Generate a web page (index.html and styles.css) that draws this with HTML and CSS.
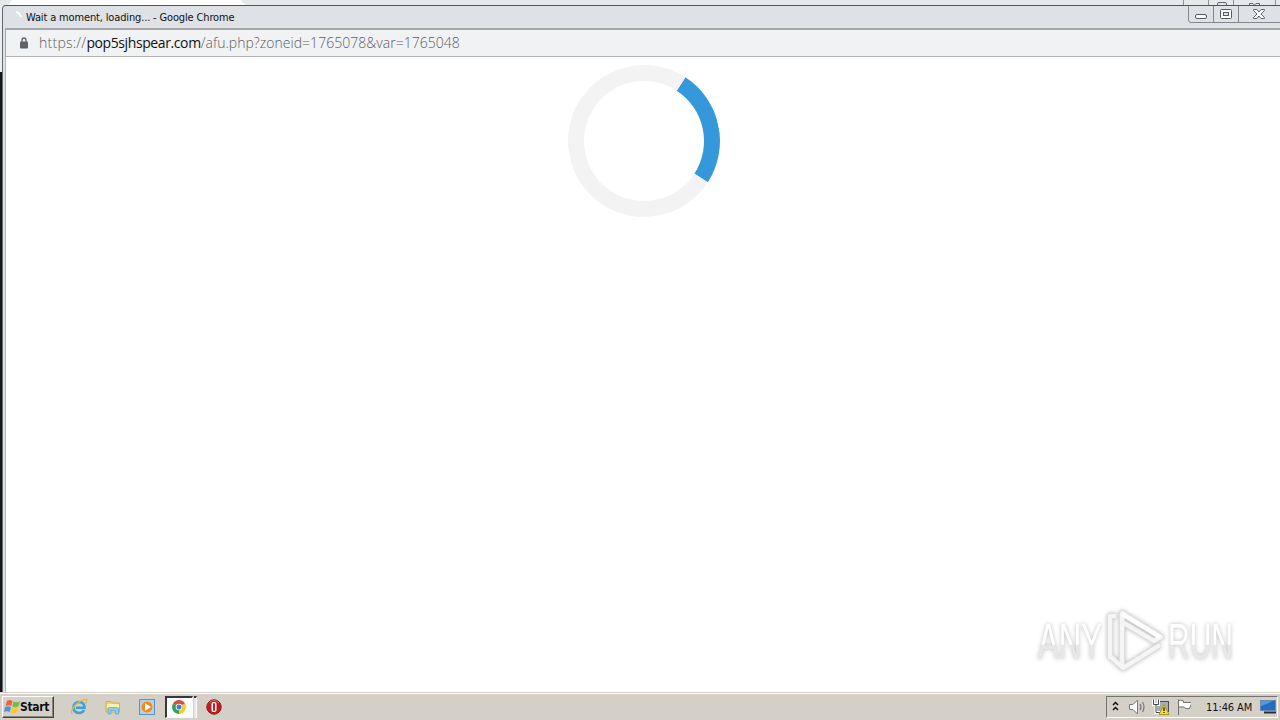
FILE: index.html
```html
<!DOCTYPE html>
<html lang="en">
  <head>
    <meta charset="UTF-8" />
    <title>Wait a moment, loading...</title>
    <link rel="stylesheet" href="styles.css">
  </head>
  <body>
    <div class="desktop">
      <div class="back-window">
        <svg width="1280" height="5">
          <path d="M5 6Q9 5 12 0H241Q243 4 248 6Z" fill="#fff"/>
          <path d="M1183.5 0V6M1208.5 0V6M1233.5 0V6M1275.5 0V6" stroke="#8d9297"/>
          <path d="M1217.5 6V4Q1217.500 2.500 1219 2.500H1225Q1226.500 2.500 1226.500 4V6M1249.500 5V3.500H1253L1254.500 5L1256 3.500H1259.500V5" fill="none" stroke="#62666b"/>
        </svg>
      </div>
      <div class="middle">
        <div class="edge"></div>
        <div class="window">
          <div class="title-bar">
            <svg class="favicon" width="8" height="8"><path d="M1 1Q5 2 6 6" fill="none" stroke="#fff" stroke-width="2"/></svg>
            <span class="title">Wait a moment, loading... - Google Chrome</span>
            <div class="controls">
              <svg width="92" height="18">
                <path d="M.5 0V14Q.5 16.500 3 16.500H92M25.500 0V16M50.500 0V16" fill="none" stroke="#85898e"/>
                <rect x="7.500" y="8.500" width="11" height="4" rx="1.500" fill="#fff" stroke="#555a60"/>
                <rect x="32.500" y="3.500" width="11" height="9" rx="1" fill="#fff" stroke="#555a60"/>
                <rect x="35.500" y="6.500" width="5" height="3" fill="#dee1e5" stroke="#555a60"/>
                <path d="M65.500 3.500H69L71 6L73 3.500H76.500V4.500L73 8L76.500 11.500V12.500H73L71 10L69 12.500H65.500V11.500L69 8L65.500 4.500Z" fill="#fff" stroke="#62666b"/>
              </svg>
            </div>
          </div>
          <div class="address-bar">
            <svg class="lock" width="8" height="12"><path d="M2 5V3.200Q2 1 4 1T6 3.200V5" fill="none" stroke="#5f6368" stroke-width="1.300"/><rect y="4.500" width="8" height="7" rx="1" fill="#5f6368"/></svg>
            <span class="url"><span class="scheme">https://</span><span class="host">pop5sjhspear.com</span><span class="path">/afu.php?zoneid=1765078&amp;var=1765048</span></span>
          </div>
          <div class="page">
            <div class="loader"></div>
          </div>
        </div>
      </div>
      <div class="taskbar">
        <div class="start">
          <svg width="17" height="16" viewBox="0 0 17 16">
            <path d="M3 2Q6 0 8.500 2L7.300 7Q4.500 5.500 1.500 7Z" fill="#ed6535"/>
            <path d="M9.500 2.500Q12.500 4 16 2.300L14.500 7.300Q11.500 9 8.300 7.500Z" fill="#79b84a"/>
            <path d="M1.200 8Q4 6.600 7 8L5.700 13Q3 11.500 0 13Z" fill="#4994dc"/>
            <path d="M8 8.500Q11 10 14.200 8.500L13 13.300Q9.500 15 6.700 13.500Z" fill="#f6c82d"/>
          </svg>
          <span>Start</span>
        </div>
        <div class="quick-launch">
          <svg class="ie" width="18" height="18" viewBox="0 0 18 18">
            <path d="M14 12Q12.500 15 9 15Q3.500 14.500 3.500 9.500Q4 4 9 4Q14.500 4.300 14.500 9.800H6" fill="none" stroke="#3ba0de" stroke-width="2.600"/>
            <path d="M2.500 16Q-.5 14 4.500 8Q11 1 16 1.300Q18 2.500 15.500 5.500" fill="none" stroke="#e4b83c" stroke-width="1.300"/>
          </svg>
          <svg class="folder" width="16" height="16" viewBox="0 0 16 16">
            <path d="M1 2.500H6L7 4H14.500V13H1Z" fill="#efd272" stroke="#d2b052"/>
            <path d="M2 5H14V9H2Z" fill="#fbefae"/>
            <path d="M3 15V10Q3 8.500 4.500 8.500H12Q13.500 8.500 13.500 10V15H10.500V11.500H6V15Z" fill="#8ecbea" stroke="#5ba6cd" stroke-width=".7"/>
          </svg>
          <svg class="media" width="16" height="16" viewBox="0 0 16 16">
            <rect x=".5" y=".5" width="15" height="15" fill="#acd1ee" stroke="#5a94c7"/>
            <circle cx="8" cy="8" r="6" fill="#f08a20" stroke="#d8dbe0" stroke-width=".7"/>
            <path d="M6 4.300L12 8L6 11.700Z" fill="#fff"/>
          </svg>
          <div class="task-active">
            <svg width="14" height="14" viewBox="0 0 14 14">
              <path d="M7 7L1 3.500A7 7 0 0 1 13 3.500Z" fill="#dc4a3b"/>
              <path d="M7 7L13 3.500A7 7 0 0 1 7 14Z" fill="#fbc82f"/>
              <path d="M7 7V14A7 7 0 0 1 1 3.500Z" fill="#37a058"/>
              <circle cx="7" cy="7" r="3.300" fill="#fff"/>
              <circle cx="7" cy="7" r="2.500" fill="#3e7ed2"/>
            </svg>
          </div>
          <div class="task-edge"></div>
          <svg class="opera" width="16" height="16" viewBox="0 0 16 16">
            <circle cx="8" cy="8" r="7.200" fill="#c01d22" stroke="#8b1518"/>
            <path d="M3 4Q8-1 13 4" fill="none" stroke="#e06d65"/>
            <rect x="5.500" y="3" width="5" height="10" rx="2" fill="#fff"/>
            <rect x="7" y="4" width="2" height="8" rx="1" fill="#b5262a"/>
          </svg>
        </div>
        <div class="tray">
          <svg class="tray-icons" width="84" height="20" viewBox="0 0 84 20">
            <path d="M6 8L8.500 5.500L11 8M6 13L8.500 10.500L11 13" fill="none" stroke="#111" stroke-width="1.500"/>
            <path d="M22.500 7.500H26L30.500 3V17L26 12.500H22.500Z" fill="#fff" stroke="#787878"/>
            <path d="M33 7Q35 10 33 13M35.500 5Q38.500 10 35.500 15" fill="none" stroke="#777" stroke-width="1.200"/>
            <rect x="50.500" y="4.500" width="11" height="10" fill="#a7adb3" stroke="#4d5052"/>
            <path d="M46.500 2.500V7.500H51.500V2.500M49 8V15.500H54" fill="none" stroke="#fff" stroke-width="3"/>
            <path d="M46.500 2.500V7.500H51.500V2.500M49 8V15.500H54" fill="none" stroke="#44474b"/>
            <path d="M57 7.500L62 17.500H52Z" fill="#ffdf28" stroke="#ad9429"/>
            <path d="M57 10.500V14M57 15V16" stroke="#111" stroke-width="1.300"/>
            <path d="M71.500 2.500V18M71.500 3.500Q74 2.500 76.500 4V5.500H85L82.500 11.500Q78.500 12.500 77 10H71.500" fill="#fff" stroke="#707070"/>
          </svg>
          <span class="clock">11:46 AM</span>
          <svg class="monitor" width="16" height="14" viewBox="0 0 16 14">
            <rect x=".5" y=".5" width="15" height="10" fill="#246bc3" stroke="#688bad"/>
            <path d="M1 1H12Q8 4 1 6Z" fill="#5698dc"/>
            <path d="M4 12.500H16" stroke="#292d36" stroke-width="2"/>
          </svg>
        </div>
      </div>
      <svg class="watermark" width="250" height="84" viewBox="0 0 250 84">
        <g class="mark" fill="none" stroke-linejoin="round">
          <path d="M92 63V11L131 35L124 39L92 20M80 57V14H86M80 54L93 66L130 43" stroke="#dedede" stroke-width="6"/>
          <path d="M92 63V11L131 35L124 39L92 20M80 57V14H86M80 54L93 66L130 43" stroke="#f5f5f5" stroke-width="4"/>
          <path d="M92 12L130 35" stroke="#fff" stroke-width="4"/>
        </g>
        <g class="mark brand">
          <text x="8" y="57" textLength="64" lengthAdjust="spacingAndGlyphs">ANY</text>
          <text x="138" y="57" textLength="65" lengthAdjust="spacingAndGlyphs">RUN</text>
        </g>
        <defs>
          <linearGradient id="fade" x1="0" y1="0" x2="0" y2="1">
            <stop offset=".54" stop-color="#fff"/>
            <stop offset=".56" stop-color="#e8e8e8"/>
          </linearGradient>
        </defs>
      </svg>
    </div>
  </body>
</html>
```
FILE: styles.css
```css
* {
  box-sizing: border-box;
}
body {
  margin: 0;
  font-family: "DejaVu Sans Condensed", "DejaVu Sans", sans-serif;
  font-size: 11px;
  color: #111;
}
svg {
  display: block;
  flex-shrink: 0;
}
.desktop {
  position: relative;
  display: flex;
  flex-direction: column;
  width: 1280px;
  height: 720px;
  overflow: hidden;
}
.back-window {
  height: 5px;
  background: #e5e9ec;
}
.middle {
  display: flex;
  height: 687px;
}
.edge {
  width: 2px;
  background: linear-gradient(#eceff1 67px, #171719 67px);
}
.window {
  flex: 1;
  display: flex;
  flex-direction: column;
  border-top: 1px solid #505357;
  border-left: 1px solid #65686b;
  border-radius: 4px 0 0 0;
  background: #dee1e5;
}
.title-bar {
  display: flex;
  height: 22px;
}
.favicon {
  margin: 5px 0 0 12px;
}
.title {
  margin-left: 3px;
  line-height: 24px;
  width: 209px;
  white-space: nowrap;
  letter-spacing: -0.15px;
}
.controls {
  margin-left: auto;
}
.address-bar {
  display: flex;
  align-items: center;
  height: 29px;
  margin-left: 2px;
  border-top: 2px solid #a5a7aa;
  border-left: 1px solid #a5a7aa;
  border-bottom: 1px solid #afb1b3;
  background: #f0f2f4;
}
.lock {
  margin-left: 14px;
}
.url {
  margin-left: 11px;
  font-family: "Open Sans", sans-serif;
  font-size: 14px;
  font-weight: 300;
  line-height: 20px;
  white-space: nowrap;
  color: #5c6064;
}
.scheme {
  letter-spacing: 0.25px;
}
.host {
  color: #111;
  font-weight: 400;
  letter-spacing: -0.4px;
}
.path {
  letter-spacing: 0.03px;
}
.page {
  flex: 1;
  margin-left: 2px;
  padding: 8px 0 0 562px;
  border-left: 1px solid #b4b6b8;
  background: #fff;
}
.loader {
  width: 152px;
  height: 152px;
  border: 16px solid #f3f3f3;
  border-top-color: #3498db;
  border-radius: 50%;
  transform: rotate(78deg);
}
.taskbar {
  display: flex;
  height: 28px;
  padding: 3px 0 0 2px;
  border-top: 1px solid #d5d1c9;
  background: linear-gradient(#fff 1px, #d5d0c7 1px);
}
.start {
  display: flex;
  align-items: center;
  width: 52px;
  height: 22px;
  padding-left: 1px;
  border: 1px solid #fff;
  border-right-color: #444;
  border-bottom-color: #444;
  box-shadow: inset -1px -1px #89857e;
  font-size: 12px;
  font-weight: bold;
}
.start span {
  margin-left: -1px;
  letter-spacing: -0.35px;
}
.quick-launch {
  display: flex;
  align-items: center;
  height: 22px;
}
.ie {
  margin-left: 16px;
}
.folder {
  margin-left: 17px;
}
.media {
  margin-left: 18px;
}
.task-active {
  display: flex;
  align-items: center;
  justify-content: center;
  width: 28px;
  height: 22px;
  margin-left: 10px;
  padding: 0 2px 2px 0;
  border: 1px solid #fff;
  border-top: 2px solid #38383a;
  border-left: 2px solid #38383a;
  background: #fff;
}
.task-edge {
  align-self: stretch;
  width: 3px;
  margin-left: 1px;
  border-top: 2px solid #38383a;
  border-right: 1px solid #fff;
  background: #e9e6e0;
}
.opera {
  margin-left: 9px;
}
.tray {
  display: flex;
  align-items: center;
  width: 172px;
  height: 22px;
  margin-left: auto;
  margin-right: 2px;
  border: 1px solid #fff;
  border-top-color: #77736d;
  border-left-color: #77736d;
}
.clock {
  width: 48px;
  margin-left: 15px;
  white-space: nowrap;
  letter-spacing: -0.1px;
}
.monitor {
  margin-left: 6px;
}
.watermark {
  position: absolute;
  left: 1030px;
  top: 602px;
}
.mark {
  filter: drop-shadow(0 0 2px #bbb);
}
.brand {
  font-family: "Liberation Sans", sans-serif;
  font-size: 50px;
  fill: url(#fade);
}
```
